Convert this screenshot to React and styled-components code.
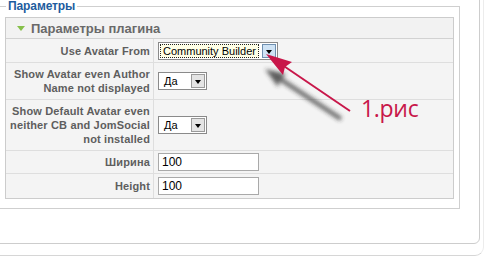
import React from 'react';
import styled, { createGlobalStyle } from 'styled-components';

const GlobalStyle = createGlobalStyle`
  html, body {
    margin: 0;
    padding: 0;
    background: #fff;
    overflow: hidden;
  }
  body {
    font-family: "Liberation Sans", Arial, sans-serif;
  }
`;

const Page = styled.div`
  position: relative;
  width: 486px;
  height: 258px;
  overflow: hidden;
`;

const Shell = styled.div`
  margin: -20px 0 0 -10px;
  width: 493px;
  padding-bottom: 11px;
  border-bottom: 1px solid #d6d6d6;
  border-right: 1px solid #ececec;
  border-bottom-right-radius: 9px;
`;

const Panel = styled.div`
  width: 490px;
  box-sizing: border-box;
  border: 1px solid #cdcdcd;
  border-radius: 6px;
  padding: 19px 0 34px 3px;
`;

const Fieldset = styled.fieldset`
  display: block;
  width: 466px;
  box-sizing: border-box;
  margin: 0;
  padding: 0 5px 9px 10px;
  border: 1px solid #cfcfcf;
  min-width: 0;
`;

const Legend = styled.legend`
  margin-left: 1px;
  padding: 0 2px;
  font-size: 12px;
  line-height: 12px;
  color: #1d5c9e;
  font-weight: bold;
  letter-spacing: -0.1px;
`;

const ParamsBox = styled.div`
  margin-top: 5px;
  width: 449px;
  box-sizing: border-box;
  border: 1px solid #cccccc;
  background: #f4f4f4;
`;

const Header = styled.div`
  display: flex;
  align-items: center;
  gap: 6px;
  height: 20px;
  padding-left: 11px;
  border-bottom: 1px solid #d2d2d2;
  background: #f2f2f2;
  font-size: 13px;
  font-weight: bold;
  color: #696969;
`;

const Triangle = styled.span`
  width: 0;
  height: 0;
  border-left: 4px solid transparent;
  border-right: 4px solid transparent;
  border-top: 5px solid #86c04a;
  margin-top: 1px;
`;

const Row = styled.div`
  display: grid;
  grid-template-columns: 148px 1fr;
  border-bottom: ${p => (p.$last ? 'none' : '1px solid #dedede')};
`;

const Label = styled.div`
  padding: ${p => p.$pad || '4px'} 3px ${p => p.$pad || '4px'} 2px;
  border-right: 1px solid #dedede;
  text-align: right;
  font-size: 11px;
  line-height: 14px;
  font-weight: bold;
  color: #5e5e5e;
  letter-spacing: 0.15px;
  display: flex;
  align-items: center;
  justify-content: flex-end;
`;

const Cell = styled.div`
  display: flex;
  align-items: center;
  padding: 2px 4px;
`;

const SelectBox = styled.div`
  display: inline-flex;
  align-items: stretch;
  height: 18px;
  box-sizing: border-box;
  border: 1px solid #8a8a8a;
  background: #fff;
  font-size: 11px;
  color: #000;
`;

const SelectValue = styled.div`
  display: flex;
  align-items: center;
  margin: 1px;
  padding: 0 ${p => (p.$focused ? '3px' : '4px')};
  min-width: ${p => p.$min || 0}px;
  outline: ${p => (p.$focused ? '1px dotted #222' : 'none')};
  outline-offset: -1px;
  background: ${p => (p.$focused ? '#ffffe6' : '#fff')};
`;

const SelectButton = styled.div`
  width: 14px;
  margin: 1px 1px 1px 2px;
  box-sizing: border-box;
  border: 1px solid ${p => (p.$hover ? '#6e8fb0' : '#9a9a9a')};
  background: ${p => (p.$hover ? '#cfe3f5' : '#e4e4e4')};
  display: flex;
  align-items: center;
  justify-content: center;
`;

const Caret = styled.span`
  width: 0;
  height: 0;
  border-left: 3.5px solid transparent;
  border-right: 3.5px solid transparent;
  border-top: 4px solid #000;
  margin-top: 2px;
`;

const TextInput = styled.div`
  width: 101px;
  height: 18px;
  box-sizing: border-box;
  border: 1px solid #a9a9a9;
  background: #fff;
  padding: 0 3px;
  font-size: 12px;
  line-height: 16px;
  color: #000;
`;

const Overlay = styled.svg`
  position: absolute;
  left: 0;
  top: 0;
  pointer-events: none;
`;

const Caption = styled.div`
  position: absolute;
  left: 361px;
  top: 93px;
  font-family: "Open Sans", "Noto Sans", sans-serif;
  font-size: 23px;
  line-height: 30px;
  color: #c8174a;
  letter-spacing: -0.3px;
`;

const Select = ({ value, focused, hover, min }) => (
  <SelectBox>
    <SelectValue $focused={focused} $min={min}>{value}</SelectValue>
    <SelectButton $hover={hover}><Caret /></SelectButton>
  </SelectBox>
);

const rows = [
  { label: 'Use Avatar From', control: <Select value="Community Builder" focused hover min={90} />, pad: '4.5px' },
  { label: 'Show Avatar even Author Name not displayed', control: <Select value="Да" min={20} /> },
  { label: 'Show Default Avatar even neither CB and JomSocial not installed', control: <Select value="Да" min={20} /> },
  { label: 'Ширина', control: <TextInput>100</TextInput> },
  { label: 'Height', control: <TextInput>100</TextInput>, pad: '5px' },
];

const Arrow = () => (
  <Overlay width="486" height="258" viewBox="0 0 486 258">
    <defs>
      <filter id="blur" x="-20%" y="-20%" width="140%" height="140%">
        <feGaussianBlur stdDeviation="2.2" />
      </filter>
    </defs>
    <g filter="url(#blur)" opacity="0.75" transform="translate(-5 11)">
      <line x1="276" y1="62" x2="346" y2="108" stroke="#2a2a2a" strokeWidth="4" />
      <polygon points="270,58 291,63 285,69 283,76" fill="#2a2a2a" />
    </g>
    <line x1="272" y1="58" x2="350" y2="111" stroke="#c8174a" strokeWidth="2" />
    <polygon points="266,54 292,62 285,67 283,75" fill="#c8174a" />
  </Overlay>
);

export default function App() {
  return (
    <Page>
      <GlobalStyle />
      <Shell>
        <Panel>
          <Fieldset>
            <Legend>Параметры</Legend>
            <ParamsBox>
              <Header>
                <Triangle />
                Параметры плагина
              </Header>
              {rows.map((r, i) => (
                <Row key={i} $last={i === rows.length - 1}>
                  <Label $pad={r.pad}>{r.label}</Label>
                  <Cell>{r.control}</Cell>
                </Row>
              ))}
            </ParamsBox>
          </Fieldset>
        </Panel>
      </Shell>
      <Arrow />
      <Caption>1.рис</Caption>
    </Page>
  );
}
